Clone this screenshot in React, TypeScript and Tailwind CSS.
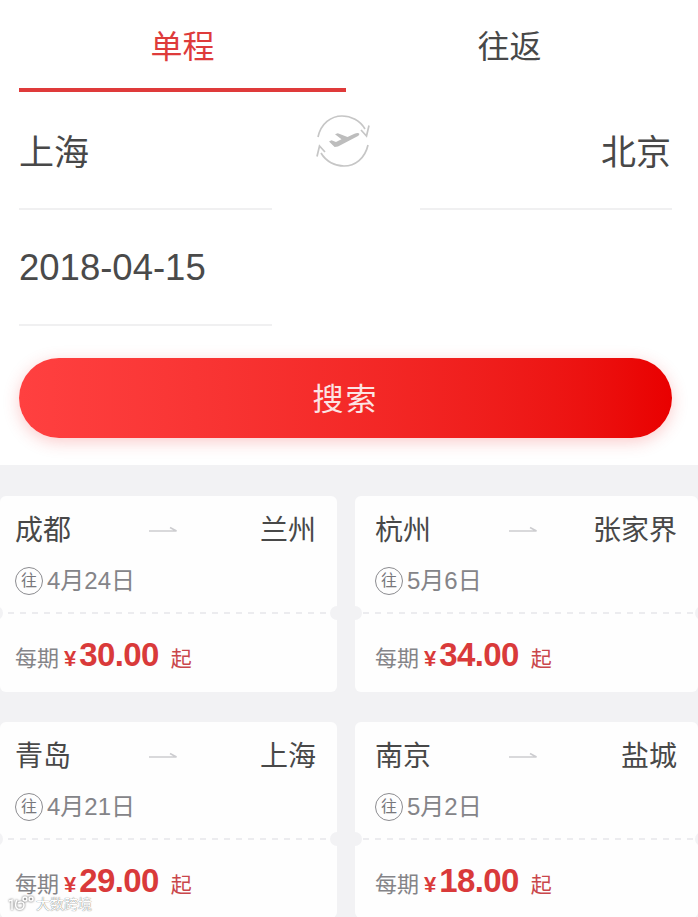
const cjk = "font-['Liberation_Sans','Noto_Sans_CJK_SC',sans-serif]";

type Card = { from: string; to: string; date: string; price: string };

function SwapIcon() {
  return (
    <svg width="56" height="54" viewBox="0 0 56 54" fill="none" className="block">
      <path d="M3 23C6 9.500 16 2 27 2c9 0 18 4.500 23 13" stroke="#c6c6c6" strokeWidth="1.700" />
      <path d="M54 11.500 51.500 22 46 16" stroke="#c6c6c6" strokeWidth="1.700" />
      <path d="M53 31C50 44.500 40 52 29 52c-9 0-18-4.500-23-13" stroke="#c6c6c6" strokeWidth="1.700" />
      <path d="M2 42.500 4.500 32l5.500 6" stroke="#c6c6c6" strokeWidth="1.700" />
      <path
        d="M14 27.500l2.500-1.200 4.500 1.800 5.500-2.800-6.500-5 2.800-1 9.700 3.800 7-3.400c2.200-.8 4.300-.8 4.800 0 .4 1-1 2.300-3.200 3.400L23 32.500l-3.400.5z"
        fill="#bdbdbd"
      />
    </svg>
  );
}

function Arrow() {
  return (
    <svg width="28" height="8" viewBox="0 0 28 8" fill="none" className="block">
      <path d="M0 6h27.500L21 2.500" stroke="#cdcdd0" strokeWidth="1.600" />
    </svg>
  );
}

function TicketCard({ card, left }: { card: Card; left: boolean }) {
  return (
    <div className="relative h-[196px] overflow-hidden rounded-[6px] bg-[#fefefe]">
      <div className={`flex items-center justify-between pr-[21px] pt-[18px] ${left ? "pl-[15px]" : "pl-[20px]"}`}>
        <span className="w-[84px] text-[28px] leading-[34px] text-[#484848]">{card.from}</span>
        <span className="mb-[4px] pr-[6px]">
          <Arrow />
        </span>
        <span className="w-[84px] whitespace-nowrap text-right text-[28px] leading-[34px] text-[#484848]">
          {card.to}
        </span>
      </div>
      <div className={`mt-[17px] flex items-center gap-[4px] ${left ? "pl-[15px]" : "pl-[20px]"}`}>
        <span className="flex h-[28px] w-[28px] items-center justify-center rounded-full border border-[#8c8c90] text-[16px] leading-none text-[#77777b]">
          往
        </span>
        <span className="text-[24px] leading-[32px] text-[#848488]">{card.date}</span>
      </div>
      <div className="ml-[8px] mt-[15px] h-[2px] bg-[repeating-linear-gradient(90deg,#ececef_0,#ececef_6px,transparent_6px,transparent_12px)]" />
      <div className={`mt-[24px] flex items-baseline ${left ? "pl-[15px]" : "pl-[20px]"}`}>
        <span className="text-[22px] leading-[34px] text-[#848488]">每期</span>
        <span className="ml-[5px] text-[22px] font-bold leading-[34px] text-[#d93a3a]">¥</span>
        <span className="ml-[3px] text-[33px] font-bold leading-[34px] tracking-[-0.6px] text-[#d93a3a]">
          {card.price}
        </span>
        <span className="ml-[12px] text-[21px] leading-[34px] text-[#c9474b]">起</span>
      </div>
      <div
        className={`absolute top-[110px] h-[14px] w-[14px] rounded-full bg-[#f2f2f4] ${left ? "left-[-11px]" : "left-[-7px]"}`}
      />
      <div
        className={`absolute top-[110px] h-[14px] w-[14px] rounded-full bg-[#f2f2f4] ${left ? "right-[-7px]" : "right-[-11px]"}`}
      />
    </div>
  );
}

const rows: Card[][] = [
  [
    { from: "成都", to: "兰州", date: "4月24日", price: "30.00" },
    { from: "杭州", to: "张家界", date: "5月6日", price: "34.00" },
  ],
  [
    { from: "青岛", to: "上海", date: "4月21日", price: "29.00" },
    { from: "南京", to: "盐城", date: "5月2日", price: "18.00" },
  ],
];

export default function App() {
  return (
    <div className={`relative h-[917px] w-[698px] overflow-hidden bg-[#f2f2f4] ${cjk}`}>
      <div className="h-[465px] bg-white">
        <div className="flex px-[19px]">
          <div className="h-[92px] w-[327px] border-b-4 border-[#df3a3a] pt-[25px] text-center text-[32px] leading-[44px] text-[#de3b3b]">
            单程
          </div>
          <div className="h-[92px] w-[327px] pt-[25px] text-center text-[32px] leading-[44px] text-[#484848]">往返</div>
        </div>
        <div className="flex w-[672px] justify-between pl-[19px]">
          <div className="h-[118px] w-[253px] border-b-2 border-[#f0f0f1] pt-[37px] text-[35px] leading-[48px] text-[#484848]">
            上海
          </div>
          <div className="mr-[6px] mt-[22px] h-[54px]">
            <SwapIcon />
          </div>
          <div className="h-[118px] w-[252px] border-b-2 border-[#f0f0f1] pr-[1px] pt-[37px] text-right text-[35px] leading-[48px] text-[#484848]">
            北京
          </div>
        </div>
        <div className="mx-[19px] h-[116px] w-[253px] border-b-2 border-[#f0f0f1] pt-[34px] text-[36.500px] leading-[48px] text-[#4a4a4a]">
          2018-04-15
        </div>
        <div className="ml-[19px] mt-[32px] flex h-[80px] w-[653px] items-center justify-center rounded-[40px] bg-gradient-to-r from-[#ff4040] to-[#e90000] pt-[5px] text-[31px] tracking-[2px] text-[#fbe4e4] shadow-[0_4px_16px_rgba(240,50,50,0.25)]">
          搜索
        </div>
      </div>
      <div className="mt-[31px] flex flex-col gap-[30px]">
        {rows.map((row, i) => (
          <div key={i} className="grid grid-cols-[337px_343px] gap-[18px]">
            <TicketCard card={row[0]} left />
            <TicketCard card={row[1]} left={false} />
          </div>
        ))}
      </div>
      <div className="absolute bottom-[3px] left-[8px] flex items-center gap-[2px] text-[14px] leading-[20px] text-white [text-shadow:0_0_1px_#444]">
        <svg
          width="26"
          height="16"
          viewBox="0 0 26 16"
          fill="none"
          stroke="#fff"
          strokeWidth="1.500"
          className="[filter:drop-shadow(0_0_1px_#555)]"
        >
          <path d="M1 5l3-1v10M9 4c-2 3-2 8 1 9 4 1 6-1 6-4s-3-4-6-2" />
          <circle cx="17" cy="3" r="2" />
          <circle cx="23" cy="3" r="2" />
        </svg>
        <span>大数跨境</span>
      </div>
    </div>
  );
}
